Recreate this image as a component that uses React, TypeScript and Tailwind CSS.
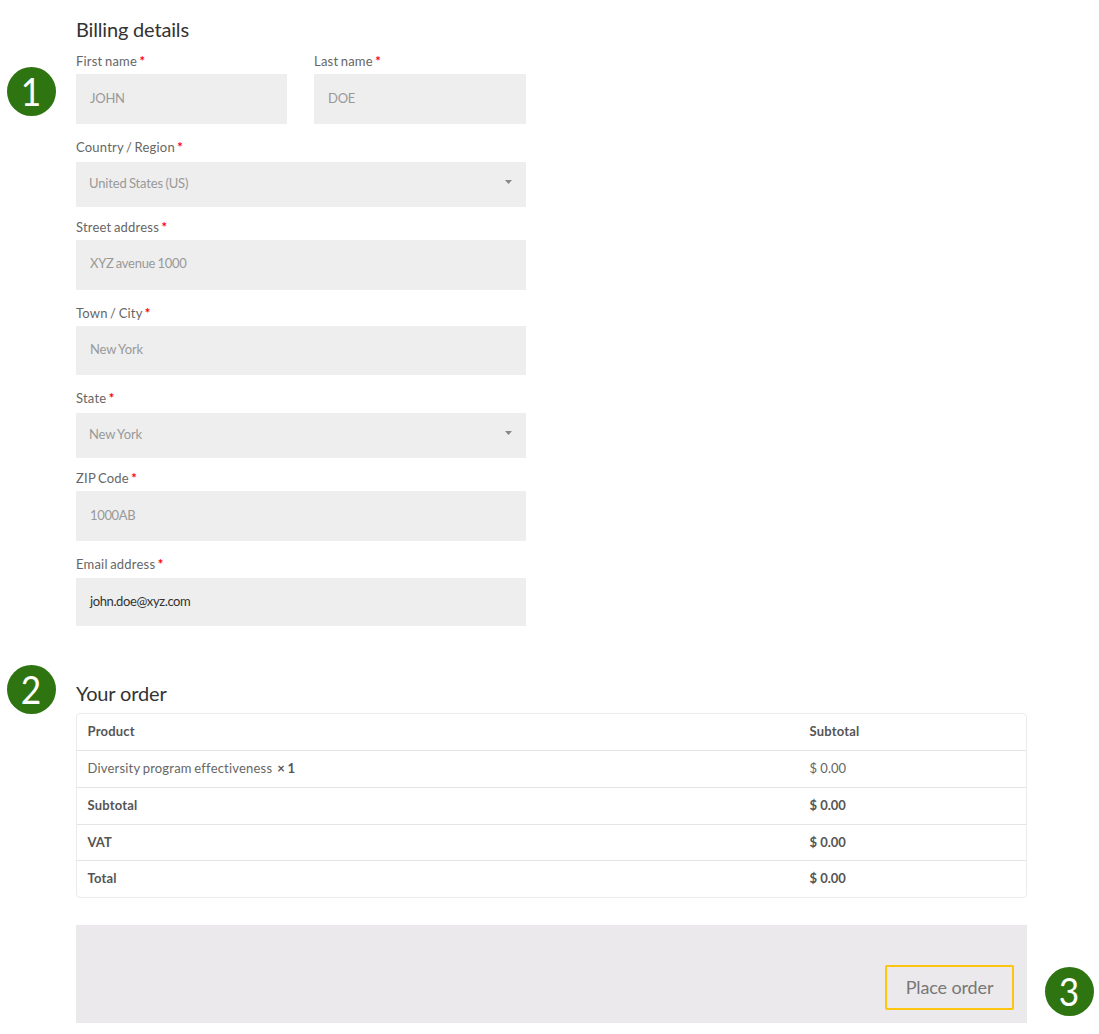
import React from "react";

type FieldProps = {
  label: string;
  value: string;
  labelClass?: string;
  boxClass: string;
  textClass?: string;
  select?: boolean;
};

function Badge({ n, className }: { n: number; className: string }) {
  return (
    <div className={`flex h-[49px] w-[49px] justify-center rounded-full bg-[#2e7511] text-[38px] leading-[48px] text-white ${className}`}>
      <span className="scale-x-[0.93]">{n}</span>
    </div>
  );
}

function Field({ label, value, labelClass = "h-[23px]", boxClass, textClass = "text-[#999] pl-[14px] tracking-[-0.25px]", select }: FieldProps) {
  return (
    <div>
      <div className={`whitespace-pre text-[13px] leading-[20px] tracking-[0.21px] [word-spacing:-1.1px] text-[#666] ${labelClass}`}>
        {label} <span className="font-bold text-[#ff0000]">*</span>
      </div>
      <div className={`flex items-center justify-between bg-[#eee] text-[13px] [word-spacing:-0.8px] ${boxClass} ${textClass}`}>
        <span>{value}</span>
        {select && (
          <svg className="mr-[14px] mb-1 h-[4px] w-[7px]" viewBox="0 0 7 4" fill="#888">
            <path d="M0 0h7L3.5 4z" />
          </svg>
        )}
      </div>
    </div>
  );
}

const rows = [
  { name: "Product", price: "Subtotal", height: "h-[36px]", strong: true },
  { name: "Diversity program effectiveness", price: "$ 0.00", height: "h-[36px]", strong: false },
  { name: "Subtotal", price: "$ 0.00", height: "h-[36px]", strong: true },
  { name: "VAT", price: "$ 0.00", height: "h-[35px]", strong: true },
  { name: "Total", price: "$ 0.00", height: "h-[36px]", strong: true },
];

export default function App() {
  return (
    <main className="h-[1034px] w-[1099px] overflow-hidden bg-white font-['Lato',sans-serif]">
      <section className="flex h-[665px]">
        <div className="w-[76px] shrink-0 pt-[67px] pl-[7px]">
          <Badge n={1} className="" />
        </div>
        <div className="w-[450px]">
          <h2 className="h-[51px] pt-[14px] text-[20px] leading-[30px] tracking-[-0.17px] text-[#333]">Billing details</h2>
          <div className="grid grid-cols-[211px_212px] justify-between">
            <Field label="First name" value="JOHN" boxClass="h-[50px] pb-px" />
            <Field label="Last name" value="DOE" boxClass="h-[50px] pb-px" />
          </div>
          <div className="mt-[13px]">
            <Field label="Country / Region" value="United States (US)" labelClass="h-[25px]" boxClass="h-[45px] pb-px" textClass="text-[#999] pl-[13px] tracking-[-0.15px]" select />
          </div>
          <div className="mt-[10px]">
            <Field label="Street address" value="XYZ avenue 1000" boxClass="h-[50px] pb-[2px]" textClass="text-[#999] pl-[14px] tracking-[-0.28px]" />
          </div>
          <div className="mt-[13px]">
            <Field label="Town / City" value="New York" boxClass="h-[49px] pb-px" textClass="text-[#999] pl-[14px] tracking-[-0.1px]" />
          </div>
          <div className="mt-[13px]">
            <Field label="State" value="New York" labelClass="h-[25px]" boxClass="h-[45px] pb-px" textClass="text-[#999] pl-[13px] tracking-[-0.1px]" select />
          </div>
          <div className="mt-[10px]">
            <Field label="ZIP Code" value="1000AB" boxClass="h-[50px] pb-px" textClass="text-[#999] pl-[14px] tracking-[-0.35px]" />
          </div>
          <div className="mt-[13px]">
            <Field label="Email address" value="john.doe@xyz.com" labelClass="h-[24px]" boxClass="h-[48px]" textClass="text-[#333] pl-[14px] tracking-[-0.4px]" />
          </div>
        </div>
      </section>
      <section className="flex h-[260px]">
        <div className="w-[76px] shrink-0 pl-[7px]">
          <Badge n={2} className="" />
        </div>
        <div className="w-[951px]">
          <h2 className="h-[48px] pt-[13px] text-[20px] leading-[30px] tracking-[-0.15px] text-[#333]">Your order</h2>
          <div className="divide-y divide-[#e4e4e4] rounded-[4px] border border-[#ebebeb] text-[13px] text-[#666]">
            {rows.map((r) => (
              <div key={r.name} className={`box-content grid grid-cols-[722px_1fr] items-center pl-[10.5px] ${r.height} ${r.strong ? "font-bold text-[#555]" : ""}`}>
                <span className={r.name === "VAT" ? "" : "tracking-[0.2px] [word-spacing:-0.9px]"}>
                  {r.name}
                  {!r.strong && <b className="ml-[5px] text-[#555]">× 1</b>}
                </span>
                <span className={r.price === "Subtotal" ? "tracking-[0.2px]" : ""}>{r.price}</span>
              </div>
            ))}
          </div>
        </div>
      </section>
      <section className="flex pl-[76px]">
        <div className="flex h-[98px] w-[951px] justify-end bg-[#ebe9eb] pt-[40px] pr-[13px]">
          <button className="h-[45px] w-[129px] rounded-[2px] border-2 border-[#fdc50f] text-[18px] leading-[41px] tracking-[-0.12px] text-[#777]">Place order</button>
        </div>
        <Badge n={3} className="mt-[42px] ml-[18px]" />
      </section>
    </main>
  );
}
